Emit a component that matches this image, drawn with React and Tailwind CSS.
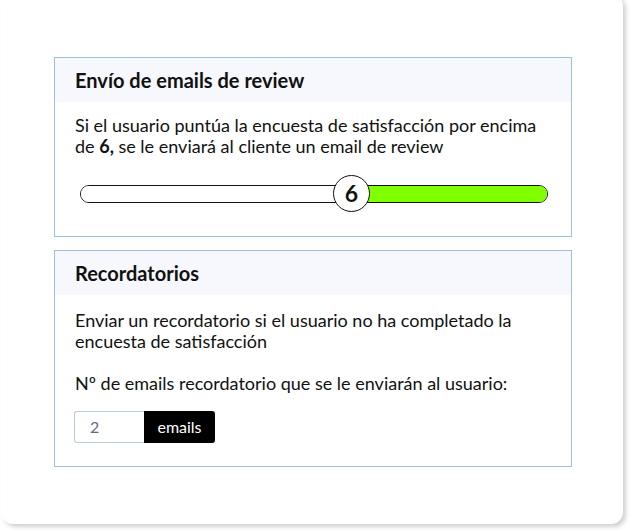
export default function App() {
  return (
    <div className="w-[631px] h-[532px] bg-white overflow-hidden" style={{ fontFamily: 'Lato, "Open Sans", sans-serif' }}>
      <div className="ml-[1px] -mt-[6px] w-[622px] h-[530px] bg-white rounded-[12px] shadow-[3px_3px_4px_rgba(0,0,0,0.18)] pt-[63px] pl-[53px]">
        <div className="w-[518px] border border-[#9cc0e0] bg-white">
          <div className="h-[44px] bg-[#f7f8fd] flex items-center pl-[20px] text-[20px] font-bold text-[#111]">
            Envío de emails de review
          </div>
          <div className="px-[20px] pt-[13px] pb-[23px]">
            <p className="text-[18px] leading-[21px] text-[#111]">
              Si el usuario puntúa la encuesta de satisfacción por encima de <b>6,</b> se le enviará al cliente un email de review
            </p>
            <div className="relative mt-[18px] ml-[5px] w-[468px] h-[38px] flex items-center">
              <div className="w-full h-[18px] rounded-full border border-[#111] bg-white overflow-hidden flex">
                <div className="w-[270px] h-full bg-white" />
                <div className="flex-1 h-full bg-[#80ff00] border-l border-[#111]" />
              </div>
              <div className="absolute left-[253px] top-0 w-[37px] h-[37px] rounded-full border-[1.5px] border-[#111] bg-white flex items-center justify-center text-[23px] font-bold text-[#111] leading-none">
                6
              </div>
            </div>
          </div>
        </div>
        <div className="w-[518px] mt-[13px] border border-[#9cc0e0] bg-white">
          <div className="h-[44px] bg-[#f7f8fd] flex items-center pl-[20px] text-[20px] font-bold text-[#111]">
            Recordatorios
          </div>
          <div className="px-[20px] pt-[15px] pb-[23px]">
            <p className="text-[18px] leading-[21px] text-[#111]">
              Enviar un recordatorio si el usuario no ha completado la encuesta de satisfacción
            </p>
            <p className="mt-[21px] text-[18px] leading-[21px] text-[#111]">
              Nº de emails recordatorio que se le enviarán al usuario:
            </p>
            <div className="mt-[17px] -ml-[1px] flex h-[32px]">
              <div className="w-[70px] h-full border border-[#b9cde0] border-r-0 rounded-l-[3px] flex items-center pl-[15px] text-[16px] text-[#6a6585]">
                2
              </div>
              <div className="w-[71px] h-full bg-black rounded-r-[3px] flex items-center justify-center text-[16px] text-white">
                emails
              </div>
            </div>
          </div>
        </div>
      </div>
    </div>
  );
}
